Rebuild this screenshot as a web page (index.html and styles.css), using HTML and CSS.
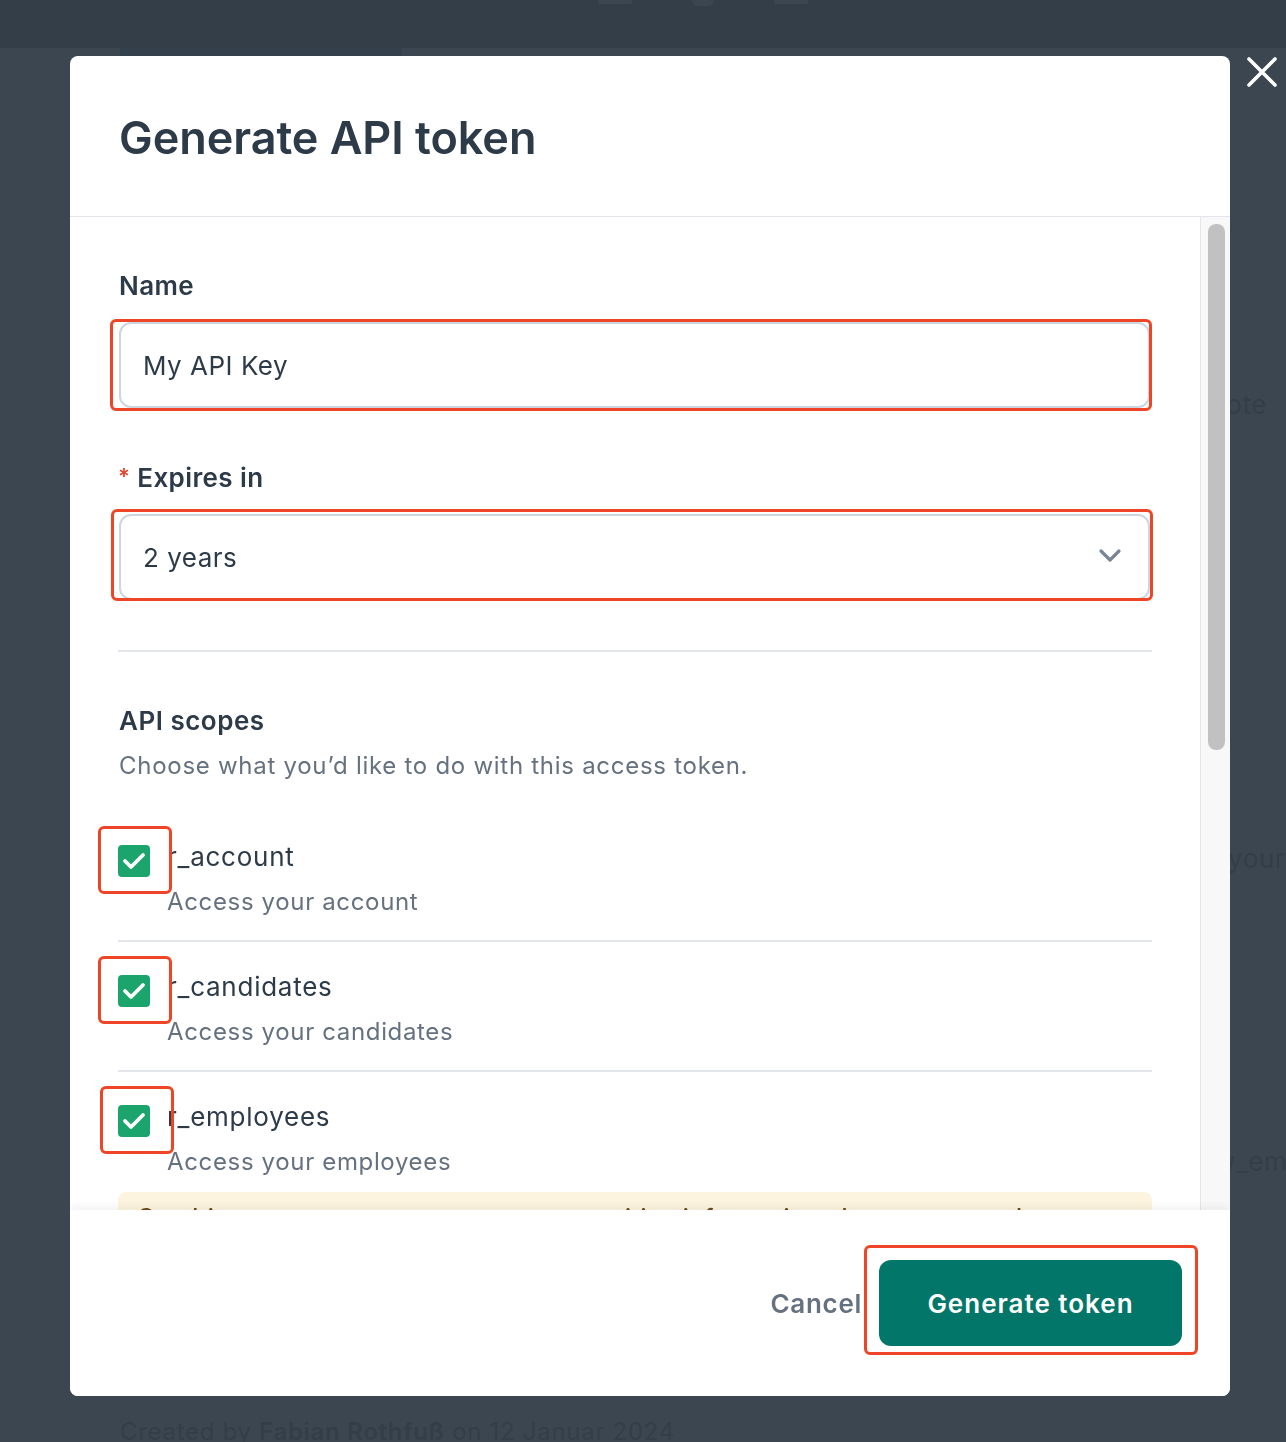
FILE: index.html
```html
<!DOCTYPE html>
<html lang="en">
<head>
<meta charset="utf-8">
<title>Generate API token</title>
<link rel="stylesheet" href="styles.css">
</head>
<body>
<div class="page">
  <div class="topbar">
    <div class="tb-item"></div><div class="tb-item tb-round"></div><div class="tb-item"></div>
  </div>
  <div class="tabs"><div class="tab-active"></div></div>
  <div class="bg-main">
    <div class="bg-right">
      <div class="bg-word w1">Note</div>
      <div class="bg-word w2">your</div>
      <div class="bg-word w3">w_employees</div>
    </div>
    <div class="bg-created">Created by <b>Fabian Rothfuß</b> on 12 Januar 2024</div>
  </div>
</div>

<div class="overlay">
  <button class="close" aria-label="Close">
    <svg width="34" height="34" viewBox="0 0 34 34"><path d="M4 4 L30 30 M30 4 L4 30" stroke="#fff" stroke-width="3.6" stroke-linecap="round"/></svg>
  </button>
  <div class="modal">
    <div class="modal-header">
      <h1 class="title">Generate API token</h1>
    </div>
    <div class="modal-body">
      <div class="content">
        <label class="label">Name</label>
        <div class="field">
          <div class="input">My API Key</div>
          <div class="mark mark-name"></div>
        </div>

        <label class="label label-exp"><span class="req">*</span>Expires in</label>
        <div class="field">
          <div class="input select">
            <span>2 years</span>
            <svg width="24" height="16" viewBox="0 0 24 16"><path d="M3 3 L12 12 L21 3" fill="none" stroke="#7b8594" stroke-width="3.2" stroke-linecap="round" stroke-linejoin="round"/></svg>
          </div>
          <div class="mark mark-select"></div>
        </div>

        <hr class="divider">

        <h2 class="section-title">API scopes</h2>
        <p class="section-desc">Choose what you’d like to do with this access token.</p>

        <div class="scope">
          <div class="cb-wrap">
            <span class="cb"><svg width="32" height="32" viewBox="0 0 32 32"><path d="M7 16 L13 22 L25 10" fill="none" stroke="#fff" stroke-width="3.8" stroke-linecap="round" stroke-linejoin="round"/></svg></span>
            <div class="mark mark-cb"></div>
          </div>
          <div class="scope-text">
            <div class="scope-name">r_account</div>
            <div class="scope-desc">Access your account</div>
          </div>
        </div>
        <div class="scope">
          <div class="cb-wrap">
            <span class="cb"><svg width="32" height="32" viewBox="0 0 32 32"><path d="M7 16 L13 22 L25 10" fill="none" stroke="#fff" stroke-width="3.8" stroke-linecap="round" stroke-linejoin="round"/></svg></span>
            <div class="mark mark-cb"></div>
          </div>
          <div class="scope-text">
            <div class="scope-name">r_candidates</div>
            <div class="scope-desc">Access your candidates</div>
          </div>
        </div>
        <div class="scope scope-last">
          <div class="cb-wrap">
            <span class="cb"><svg width="32" height="32" viewBox="0 0 32 32"><path d="M7 16 L13 22 L25 10" fill="none" stroke="#fff" stroke-width="3.8" stroke-linecap="round" stroke-linejoin="round"/></svg></span>
            <div class="mark mark-cb mark-cb3"></div>
          </div>
          <div class="scope-text">
            <div class="scope-name">r_employees</div>
            <div class="scope-desc">Access your employees</div>
          </div>
        </div>

        <div class="notice">Combine scopes to grant access to sensitive information about your employees.</div>
      </div>
      <div class="scrollbar"><div class="thumb"></div></div>
    </div>
    <div class="modal-footer">
      <button class="btn-cancel">Cancel</button>
      <div class="btn-wrap">
        <button class="btn-primary">Generate token</button>
        <div class="mark mark-btn"></div>
      </div>
    </div>
  </div>
</div>
</body>
</html>
```
FILE: styles.css
```css
* { box-sizing: border-box; }
html, body { margin: 0; padding: 0; }
body {
  width: 1286px;
  height: 1442px;
  overflow: hidden;
  background: #3c4650;
  font-family: Inter, "Noto Sans", "Liberation Sans", sans-serif;
  color: #2d3a48;
}

/* background page (dimmed) */
.page { height: 1442px; display: flex; flex-direction: column; }
.topbar {
  height: 48px;
  background: #343e48;
  display: flex;
  justify-content: center;
  gap: 60px;
  padding-left: 120px;
}
.tb-item { width: 34px; height: 4px; background: #3c4650; border-radius: 0 0 2px 2px; }
.tb-round { width: 22px; border-radius: 0 0 11px 11px; height: 6px; }
.tabs { height: 8px; display: flex; padding-left: 120px; }
.tab-active { width: 282px; height: 8px; background: #34414c; }
.bg-main { flex: 1; display: flex; flex-direction: column; position: relative; }
.bg-right { display: flex; flex-direction: column; align-items: flex-start; padding-left: 1228px; }
.bg-word { font-size: 26px; color: #343e48; white-space: nowrap; line-height: 32px; letter-spacing: 0.6px; }
.bg-word.w1 { margin-top: 333px; margin-left: -22px; }
.bg-word.w2 { margin-top: 422px; }
.bg-word.w3 { margin-top: 271px; margin-left: -14px; }
.bg-created {
  margin-top: auto;
  padding-left: 120px;
  font-size: 24px;
  line-height: 32px;
  color: #343e48;
  margin-bottom: -6px;
  letter-spacing: 0.7px;
  white-space: nowrap;
}
.bg-created b { font-weight: 600; }

/* overlay + modal */
.overlay {
  position: fixed;
  inset: 0;
  padding: 56px 0 0 70px;
}
.close {
  position: absolute;
  top: 55px;
  left: 1245px;
  background: none;
  border: 0;
  padding: 0;
  width: 34px;
  height: 34px;
}
.modal {
  width: 1160px;
  height: 1340px;
  background: #fff;
  border-radius: 8px;
  display: flex;
  flex-direction: column;
  overflow: hidden;
}
.modal-header {
  height: 161px;
  flex: none;
  border-bottom: 1px solid #e2e6ea;
  padding: 54px 49px 0;
}
.title {
  margin: 0;
  font-size: 45px;
  line-height: 56px;
  font-weight: 600;
  letter-spacing: -0.05px;
  color: #2d3a48;
}
.modal-body {
  flex: 1;
  display: flex;
  min-height: 0;
  overflow: hidden;
}
.content {
  flex: 1;
  padding: 53px 48px 0 49px;
  min-width: 0;
}
.scrollbar {
  width: 30px;
  flex: none;
  background: #f8f8f8;
  border-left: 1px solid #e6e6e6;
  padding: 7px 5px 0 7px;
}
.thumb {
  height: 526px;
  background: #c1c1c1;
  border-radius: 8px;
}

.label {
  display: block;
  font-size: 26px;
  line-height: 32px;
  font-weight: 600;
  color: #2d3a48;
  margin-bottom: 20px;
  letter-spacing: 0.4px;
}
.label-exp { margin-top: 52px; margin-left: -1px; }
.req { color: #e5432a; font-size: 22px; margin-right: 7px; vertical-align: 3px; }
.field { position: relative; width: 1031px; }
.input {
  height: 86px;
  border: 2px solid #cdd5e0;
  border-radius: 12px;
  padding: 0 22px;
  display: flex;
  align-items: center;
  font-size: 26px;
  color: #2d3a48;
  letter-spacing: 0.5px;
}
.select { justify-content: space-between; padding-right: 26px; }
.select svg { margin-top: -2px; }

.mark {
  position: absolute;
  border: 3px solid #ee4527;
  border-radius: 6px;
  pointer-events: none;
}
.mark-name { left: -9px; top: -3px; right: -2px; bottom: -3px; }
.mark-select { left: -8px; top: -5px; right: -3px; bottom: -1px; }

.divider {
  border: 0;
  border-top: 2px solid #e3e7ec;
  margin: 50px 0 0 -1px;
  width: 1034px;
}
.section-title {
  margin: 53px 0 0;
  font-size: 26px;
  line-height: 32px;
  font-weight: 600;
  color: #2d3a48;
  letter-spacing: 0.5px;
}
.section-desc {
  margin: 13px 0 0;
  font-size: 24px;
  line-height: 32px;
  color: #66717f;
  letter-spacing: 0.72px;
}

.scope {
  display: flex;
  gap: 17px;
  padding: 29px 0 22px;
  border-bottom: 2px solid #e3e7ec;
  margin-left: -1px;
}
.section-desc + .scope { margin-top: 30px; }
.scope-last { border-bottom: 0; padding-bottom: 0; }
.cb-wrap { position: relative; width: 32px; height: 32px; margin-top: 4px; flex: none; }
.cb {
  display: block;
  width: 32px;
  height: 32px;
  background: #1ba56c;
  border-radius: 4px;
}
.cb svg { display: block; }
.mark-cb { left: -20px; top: -19px; width: 74px; height: 68px; }
.mark-cb3 { left: -18px; }
.scope-name { font-size: 26px; line-height: 32px; color: #2d3a48; letter-spacing: 0.75px; }
.scope-desc { font-size: 24px; line-height: 32px; color: #66717f; margin-top: 13px; letter-spacing: 0.65px; }

.notice {
  margin-top: 14px;
  margin-left: -1px;
  width: 1034px;
  background: #fcf4de;
  border-radius: 8px;
  padding: 10px 19px;
  font-size: 24px;
  line-height: 32px;
  color: #6b4a1e;
  font-weight: 500;
  height: 120px;
  letter-spacing: 0.6px;
}

.modal-footer {
  height: 186px;
  flex: none;
  display: flex;
  align-items: center;
  justify-content: flex-end;
  padding-right: 48px;
  gap: 17px;
  background: #fff;
  box-shadow: 0 -3px 8px rgba(0, 0, 0, 0.06);
  position: relative;
}
.btn-cancel {
  background: none;
  border: 0;
  padding: 0;
  font-family: inherit;
  font-size: 26px;
  font-weight: 600;
  color: #66717f;
  letter-spacing: 0.7px;
}
.btn-wrap { position: relative; }
.btn-primary {
  display: block;
  width: 303px;
  height: 86px;
  border: 0;
  border-radius: 12px;
  background: #03766a;
  color: #fff;
  font-family: inherit;
  font-size: 26px;
  font-weight: 600;
  letter-spacing: 1px;
}
.mark-btn { left: -15px; top: -15px; width: 334px; height: 110px; }
```
